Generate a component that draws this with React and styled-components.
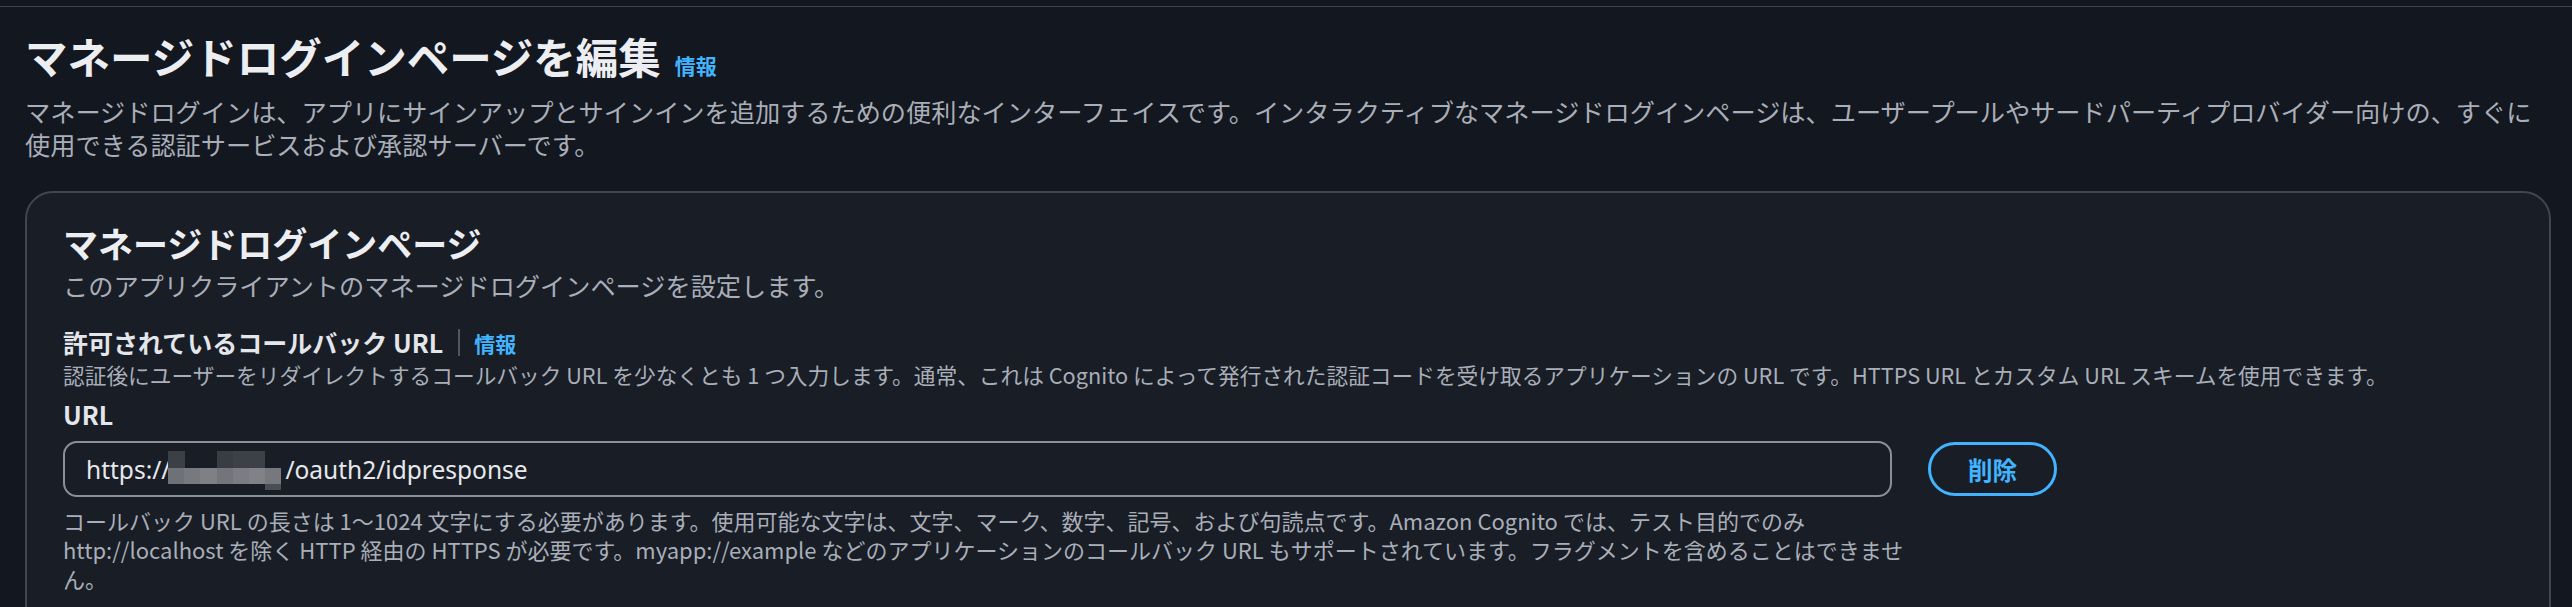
import React from "react";
import styled, { createGlobalStyle } from "styled-components";

const GlobalStyle = createGlobalStyle`
  body {
    margin: 0;
    background: #13171f;
    font-family: "Noto Sans CJK JP", "Noto Sans", sans-serif;
  }
`;

const TopStrip = styled.div`
  height: 6px;
  border-bottom: 1px solid #3e434c;
`;

const Page = styled.main`
  padding: 0 21px 0 25px;
`;

const Header = styled.header`
  padding-top: 23px;
`;

const TitleRow = styled.div`
  display: flex;
  align-items: baseline;
  gap: 14px;
`;

const Title = styled.h1`
  margin: 0;
  font-size: 42.5px;
  line-height: 52px;
  font-weight: 700;
  color: #eceef2;
`;

const InfoLink = styled.a`
  font-size: 21px;
  font-weight: 700;
  color: #42b4ff;
  text-decoration: none;
`;

const Description = styled.p`
  margin: 13px 0 0;
  font-size: 25.2px;
  line-height: 33px;
  color: #a9aeb8;
`;

const Card = styled.section`
  margin-top: 30px;
  border: 2px solid #404753;
  border-radius: 28px;
  background: #181d26;
  padding: 29px 36px 40px;
`;

const CardTitle = styled.h2`
  margin: 0;
  font-size: 35px;
  line-height: 42px;
  font-weight: 700;
  color: #eceef2;
`;

const CardSubtitle = styled.p`
  margin: 5px 0 0;
  font-size: 25.2px;
  line-height: 33px;
  color: #a9aeb8;
`;

const Field = styled.div`
  margin-top: 24px;
`;

const LabelRow = styled.div`
  display: flex;
  align-items: center;
`;

const Label = styled.label`
  display: block;
  font-size: 25px;
  line-height: 33px;
  font-weight: 700;
  color: #e3e6eb;
  margin-top: ${p => p.$top || 0}px;
`;

const Divider = styled.span`
  width: 2px;
  height: 27px;
  background: #4f5764;
  margin: 0 14px 0 15px;
`;

const FieldDesc = styled.p`
  margin: 2px 0 0;
  font-size: 21.7px;
  line-height: 28px;
  color: #a9aeb8;
`;

const EntryRow = styled.div`
  display: flex;
  align-items: center;
  gap: 36px;
  margin-top: 10px;
`;

const InputBox = styled.div`
  box-sizing: border-box;
  width: 1829px;
  height: 56px;
  display: flex;
  align-items: center;
  padding: 0 21px;
  border: 2px solid #8b8f98;
  border-radius: 14px;
  font-family: "Noto Sans", sans-serif;
  font-size: 24.5px;
  color: #e6e8ec;
  white-space: pre;
`;

const Mosaic = styled.svg`
  flex: none;
  margin-left: -2px;
  margin-right: 1px;
  margin-top: 2px;
`;

const DeleteButton = styled.button`
  box-sizing: border-box;
  width: 129px;
  height: 54px;
  border: 3px solid #42b4ff;
  border-radius: 28px;
  background: transparent;
  color: #42b4ff;
  font-family: "Noto Sans CJK JP", sans-serif;
  font-size: 24.5px;
  font-weight: 700;
`;

const HelpText = styled.p`
  margin: 9px 0 0;
  width: 1850px;
  font-size: 22px;
  line-height: 29px;
  color: #a9aeb8;
`;

const blocks = [
  [0, 0, 17, 17, "#3d3f47"],
  [49, 0, 16, 17, "#3a3c44"],
  [65, 0, 32, 17, "#3e4048"],
  [0, 17, 16, 16, "#6f7178"],
  [16, 17, 16, 16, "#77797f"],
  [32, 17, 17, 16, "#7e8086"],
  [49, 17, 16, 16, "#73757b"],
  [65, 17, 16, 16, "#7b7d83"],
  [81, 17, 16, 16, "#808288"],
  [97, 17, 16, 16, "#76787e"],
  [97, 33, 16, 6, "#4a4d55"],
];

const App = () => {
  return (
    <>
      <GlobalStyle />
      <TopStrip />
      <Page>
        {/* ヘッダー */}
        <Header>
          <TitleRow>
            <Title>マネージドログインページを編集</Title>
            <InfoLink href="#">情報</InfoLink>
          </TitleRow>
          <Description>
            マネージドログインは、アプリにサインアップとサインインを追加するための便利なインターフェイスです。インタラクティブなマネージドログインページは、ユーザープールやサードパーティプロバイダー向けの、すぐに使用できる認証サービスおよび承認サーバーです。
          </Description>
        </Header>

        {/* マネージドログインページ */}
        <Card>
          <CardTitle>マネージドログインページ</CardTitle>
          <CardSubtitle>このアプリクライアントのマネージドログインページを設定します。</CardSubtitle>

          <Field>
            <LabelRow>
              <Label>許可されているコールバック URL</Label>
              <Divider />
              <InfoLink href="#">情報</InfoLink>
            </LabelRow>
            <FieldDesc>
              認証後にユーザーをリダイレクトするコールバック URL を少なくとも 1 つ入力します。通常、これは Cognito によって発行された認証コードを受け取るアプリケーションの URL です。HTTPS URL とカスタム URL スキームを使用できます。
            </FieldDesc>

            <Label $top={9}>URL</Label>
            <EntryRow>
              <InputBox>
                https://
                <Mosaic width="116" height="39" viewBox="0 0 116 39">
                  {blocks.map(([x, y, w, h, c], i) => (
                    <rect key={i} x={x} y={y} width={w} height={h} fill={c} />
                  ))}
                </Mosaic>
                /oauth2/idpresponse
              </InputBox>
              <DeleteButton type="button">削除</DeleteButton>
            </EntryRow>
            <HelpText>
              コールバック URL の長さは 1〜1024 文字にする必要があります。使用可能な文字は、文字、マーク、数字、記号、および句読点です。Amazon Cognito では、テスト目的でのみ http://localhost を除く HTTP 経由の HTTPS が必要です。myapp://example などのアプリケーションのコールバック URL もサポートされています。フラグメントを含めることはできません。
            </HelpText>
          </Field>
        </Card>
      </Page>
    </>
  );
};

export default App;
